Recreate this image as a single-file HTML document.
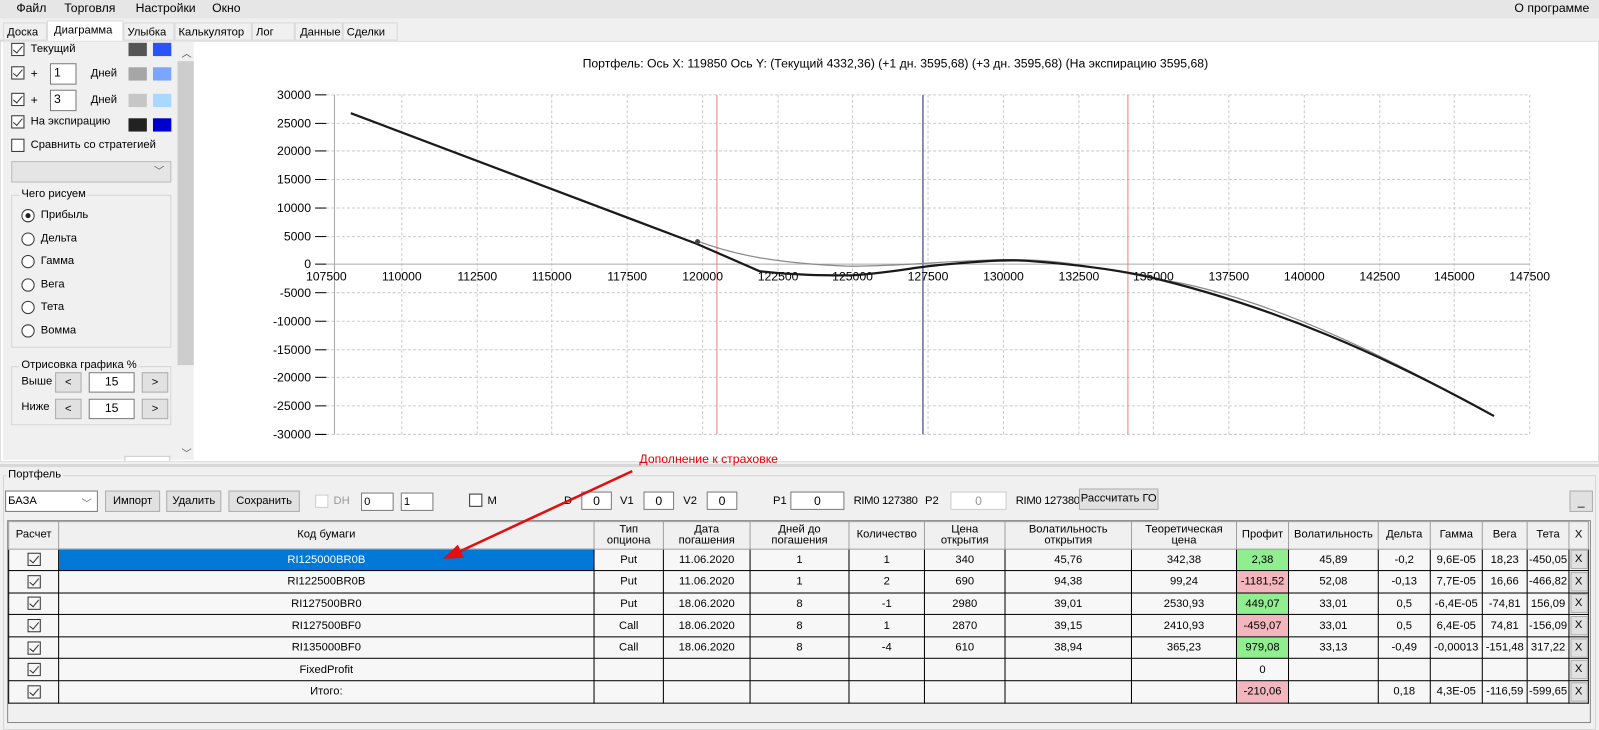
<!DOCTYPE html><html><head><meta charset="utf-8"><style>
*{box-sizing:border-box}body{margin:0;width:1599px;height:719px;overflow:hidden;background:#f0f0f0;font-family:"Liberation Sans",sans-serif;font-size:12px;color:#000;position:relative}
#w{position:absolute;left:0;top:0;width:1568px;height:705px;transform:scale(1.0198);transform-origin:0 0}
.a{position:absolute;white-space:nowrap}
.cb{position:absolute;width:13px;height:13px;border:1px solid #333;background:#fff}
.cb.c::after{content:"";position:absolute;left:3px;top:0px;width:4px;height:8px;border:solid #333;border-width:0 1px 1px 0;transform:rotate(40deg)}
.sw{position:absolute;width:18px;height:13px}
.tb{position:absolute;border:1px solid #7a7a7a;background:#fff;text-align:center;height:18px;line-height:16px}
.btn{position:absolute;border:1px solid #adadad;background:#e1e1e1;text-align:center;height:21px;line-height:19px}
.rad{position:absolute;width:13px;height:13px;border:1px solid #333;border-radius:50%;background:#fff}
table{position:absolute;left:8px;top:511px;border-collapse:collapse;font-size:11px}
td{border:1px solid #000;text-align:center;height:21.6px;padding:0;background:#f7f7f7;line-height:12px}
th{border:1px solid #a0a0a0;font-weight:normal;background:#f0f0f0;height:26.5px;line-height:11px;font-size:11px;padding:0}
td.g{background:#90ee90}td.r{background:#f4b6be}
.ck{display:inline-block;width:13px;height:13px;border:1px solid #333;position:relative;vertical-align:middle}
.ck::after{content:"";position:absolute;left:3px;top:0;width:4px;height:8px;border:solid #333;border-width:0 1px 1px 0;transform:rotate(40deg)}
.x{border:1px solid #adadad;background:#e1e1e1;display:inline-block;width:17px;height:19px;line-height:17px}
</style></head><body><div id="w">
<div class="a" style="left:0;top:0;width:1568px;height:18px;background:#e6e6e6"></div>
<div class="a" style="left:16px;top:1px;font-size:12px">Файл</div>
<div class="a" style="left:63px;top:1px">Торговля</div>
<div class="a" style="left:133px;top:1px">Настройки</div>
<div class="a" style="left:208px;top:1px">Окно</div>
<div class="a" style="left:1485px;top:1px">О программе</div>
<div class="a" style="left:0;top:22px;width:390px;height:18px;border-bottom:1px solid #ccc"></div>
<div class="a" style="left:3px;top:22px;width:43px;height:18px;border:1px solid #d9d9d9;padding:3px 3px;font-size:11px">Доска</div>
<div class="a" style="left:46px;top:20px;width:75px;height:21px;background:#fff;border:1px solid #d9d9d9;border-bottom:none;padding:3px 6px;font-size:11px">Диаграмма</div>
<div class="a" style="left:121px;top:22px;width:50px;height:18px;border:1px solid #d9d9d9;padding:3px 3px;font-size:11px">Улыбка</div>
<div class="a" style="left:171px;top:22px;width:76px;height:18px;border:1px solid #d9d9d9;padding:3px 3px;font-size:11px">Калькулятор</div>
<div class="a" style="left:247px;top:22px;width:42px;height:18px;border:1px solid #d9d9d9;padding:3px 3px;font-size:11px">Лог</div>
<div class="a" style="left:289px;top:22px;width:47px;height:18px;border:1px solid #d9d9d9;padding:3px 1px;text-align:right;font-size:11px">Данные</div>
<div class="a" style="left:336px;top:22px;width:54px;height:18px;border:1px solid #d9d9d9;padding:3px 3px;font-size:11px">Сделки</div>
<div class="a" style="left:0;top:40px;width:1568px;height:413px;background:#fff;border:1px solid #ddd"></div>
<div class="a" style="left:3px;top:41px;width:171px;height:410px;background:#f0f0f0"></div>
<div class="a" style="left:174px;top:41px;width:16px;height:410px;background:#f0f0f0"></div>
<div class="a" style="left:174px;top:60px;width:16px;height:298px;background:#cdcdcd"></div>
<div class="a" style="left:178px;top:44px;font-size:10px;color:#555">︿</div>
<div class="a" style="left:178px;top:436px;font-size:10px;color:#555">﹀</div>
<div class="cb c" style="left:11px;top:42px"></div><div class="a" style="left:30px;top:42px;font-size:11px">Текущий</div>
<div class="sw" style="left:126px;top:42px;background:#555"></div><div class="sw" style="left:150px;top:42px;background:#2a52ff"></div>
<div class="cb c" style="left:11px;top:65px"></div><div class="a" style="left:30px;top:65px">+</div><div class="tb" style="left:49px;top:62px;width:26px;height:21px;text-align:left;padding-left:3px">1</div><div class="a" style="left:89px;top:66px;font-size:11px">Дней</div>
<div class="sw" style="left:126px;top:66px;background:#a6a6a6"></div><div class="sw" style="left:150px;top:66px;background:#7aa6ff"></div>
<div class="cb c" style="left:11px;top:91px"></div><div class="a" style="left:30px;top:91px">+</div><div class="tb" style="left:49px;top:88px;width:26px;height:21px;text-align:left;padding-left:3px">3</div><div class="a" style="left:89px;top:92px;font-size:11px">Дней</div>
<div class="sw" style="left:126px;top:92px;background:#c6c6c6"></div><div class="sw" style="left:150px;top:92px;background:#a8d8ff"></div>
<div class="cb c" style="left:11px;top:113px"></div><div class="a" style="left:30px;top:113px;font-size:11px">На экспирацию</div>
<div class="sw" style="left:126px;top:116px;background:#222"></div><div class="sw" style="left:150px;top:116px;background:#0000cc"></div>
<div class="cb" style="left:11px;top:136px"></div><div class="a" style="left:30px;top:136px;font-size:11px">Сравнить со стратегией</div>
<div class="a" style="left:11px;top:158px;width:157px;height:21px;border:1px solid #bbb;background:#e5e5e5;text-align:right;padding-right:6px;color:#555;font-size:10px;line-height:19px">﹀</div>
<div class="a" style="left:11px;top:191px;width:157px;height:150px;border:1px solid #d5d5d5"></div>
<div class="a" style="left:19px;top:184px;background:#f0f0f0;padding:0 2px;font-size:11px">Чего рисуем</div>
<div class="rad" style="left:21px;top:205px"><div style="position:absolute;left:3px;top:3px;width:5px;height:5px;border-radius:50%;background:#222"></div></div><div class="a" style="left:40px;top:205px;font-size:11px">Прибыль</div>
<div class="rad" style="left:21px;top:228px"></div><div class="a" style="left:40px;top:228px;font-size:11px">Дельта</div>
<div class="rad" style="left:21px;top:250px"></div><div class="a" style="left:40px;top:250px;font-size:11px">Гамма</div>
<div class="rad" style="left:21px;top:273px"></div><div class="a" style="left:40px;top:273px;font-size:11px">Вега</div>
<div class="rad" style="left:21px;top:295px"></div><div class="a" style="left:40px;top:295px;font-size:11px">Тета</div>
<div class="rad" style="left:21px;top:318px"></div><div class="a" style="left:40px;top:318px;font-size:11px">Вомма</div>
<div class="a" style="left:11px;top:359px;width:157px;height:58px;border:1px solid #d5d5d5"></div>
<div class="a" style="left:19px;top:352px;background:#f0f0f0;padding:0 2px;font-size:11px">Отрисовка графика %</div>
<div class="a" style="left:21px;top:368px;font-size:11px">Выше</div><div class="btn" style="left:54px;top:365px;width:26px;height:20px;font-size:11px">&lt;</div><div class="tb" style="left:87px;top:365px;width:45px;height:20px">15</div><div class="btn" style="left:139px;top:365px;width:26px;height:20px;font-size:11px">&gt;</div>
<div class="a" style="left:21px;top:393px;font-size:11px">Ниже</div><div class="btn" style="left:54px;top:391px;width:26px;height:20px;font-size:11px">&lt;</div><div class="tb" style="left:87px;top:391px;width:45px;height:20px">15</div><div class="btn" style="left:139px;top:391px;width:26px;height:20px;font-size:11px">&gt;</div>
<div class="a" style="left:122px;top:447px;width:45px;height:5px;border:1px solid #ccc;border-bottom:none;background:#fff"></div>

<svg class="a" style="left:0;top:0" width="1568" height="460">
<text x="878" y="66" text-anchor="middle" font-family="Liberation Sans" font-size="12">Портфель: Ось X:  119850 Ось Y:   (Текущий 4332,36)   (+1 дн. 3595,68)   (+3 дн. 3595,68)   (На экспирацию 3595,68)</text>
<g stroke="#ccc" stroke-dasharray="3,2" stroke-width="1">
<line x1="320" y1="93" x2="1500" y2="93"/><line x1="320" y1="121" x2="1500" y2="121"/><line x1="320" y1="148" x2="1500" y2="148"/><line x1="320" y1="176" x2="1500" y2="176"/><line x1="320" y1="204" x2="1500" y2="204"/><line x1="320" y1="232" x2="1500" y2="232"/><line x1="320" y1="287" x2="1500" y2="287"/><line x1="320" y1="315" x2="1500" y2="315"/><line x1="320" y1="343" x2="1500" y2="343"/><line x1="320" y1="370" x2="1500" y2="370"/><line x1="320" y1="398" x2="1500" y2="398"/><line x1="320" y1="426" x2="1500" y2="426"/>
<line x1="394" y1="93" x2="394" y2="426"/><line x1="468" y1="93" x2="468" y2="426"/><line x1="541" y1="93" x2="541" y2="426"/><line x1="615" y1="93" x2="615" y2="426"/><line x1="689" y1="93" x2="689" y2="426"/><line x1="763" y1="93" x2="763" y2="426"/><line x1="836" y1="93" x2="836" y2="426"/><line x1="910" y1="93" x2="910" y2="426"/><line x1="984" y1="93" x2="984" y2="426"/><line x1="1058" y1="93" x2="1058" y2="426"/><line x1="1131" y1="93" x2="1131" y2="426"/><line x1="1205" y1="93" x2="1205" y2="426"/><line x1="1279" y1="93" x2="1279" y2="426"/><line x1="1353" y1="93" x2="1353" y2="426"/><line x1="1426" y1="93" x2="1426" y2="426"/><line x1="1500" y1="93" x2="1500" y2="426"/>
</g>
<line x1="328" y1="93" x2="328" y2="426" stroke="#aaa"/>
<line x1="320" y1="259" x2="1500" y2="259" stroke="#aaa"/>
<line x1="703" y1="93" x2="703" y2="426" stroke="#f08080"/>
<line x1="1106" y1="93" x2="1106" y2="426" stroke="#f08080"/>
<line x1="905" y1="93" x2="905" y2="426" stroke="#6a6a9a" stroke-width="1.5"/>
<g font-family="Liberation Sans" font-size="12" text-anchor="end">
<text x="305" y="97">30000</text><text x="305" y="125">25000</text><text x="305" y="152">20000</text><text x="305" y="180">15000</text><text x="305" y="208">10000</text><text x="305" y="236">5000</text><text x="305" y="263">0</text><text x="305" y="291">-5000</text><text x="305" y="319">-10000</text><text x="305" y="347">-15000</text><text x="305" y="374">-20000</text><text x="305" y="402">-25000</text><text x="305" y="430">-30000</text>
</g>
<g stroke="#000"><line x1="309" y1="93" x2="320" y2="93"/><line x1="309" y1="121" x2="320" y2="121"/><line x1="309" y1="148" x2="320" y2="148"/><line x1="309" y1="176" x2="320" y2="176"/><line x1="309" y1="204" x2="320" y2="204"/><line x1="309" y1="232" x2="320" y2="232"/><line x1="309" y1="259" x2="320" y2="259"/><line x1="309" y1="287" x2="320" y2="287"/><line x1="309" y1="315" x2="320" y2="315"/><line x1="309" y1="343" x2="320" y2="343"/><line x1="309" y1="370" x2="320" y2="370"/><line x1="309" y1="398" x2="320" y2="398"/><line x1="309" y1="426" x2="320" y2="426"/></g>
<g font-family="Liberation Sans" font-size="12" text-anchor="middle">
<text x="320" y="275">107500</text><text x="394" y="275">110000</text><text x="468" y="275">112500</text><text x="541" y="275">115000</text><text x="615" y="275">117500</text><text x="689" y="275">120000</text><text x="763" y="275">122500</text><text x="836" y="275">125000</text><text x="910" y="275">127500</text><text x="984" y="275">130000</text><text x="1058" y="275">132500</text><text x="1131" y="275">135000</text><text x="1205" y="275">137500</text><text x="1279" y="275">140000</text><text x="1353" y="275">142500</text><text x="1426" y="275">145000</text><text x="1500" y="275">147500</text>
</g>
<path d="M683,236 C720,250 760,258 830,261 C880,262 950,253 1010,255 C1060,257 1100,268 1160,278 C1260,300 1360,350 1465,408" fill="none" stroke="#888" stroke-width="1.2"/>
<path d="M344,111 L683,239 L745,266 C780,270 810,270 835,270 C870,268 890,263 920,260 C960,256 990,254 1010,256 C1050,259 1090,264 1120,270 C1250,300 1360,350 1465,408" fill="none" stroke="#1a1a1a" stroke-width="2.2"/>
<circle cx="684" cy="237" r="2.5" fill="#444"/>
</svg>

<div class="a" style="left:0;top:455px;width:1568px;height:3px;background:#d8d8d8"></div>
<div class="a" style="left:3px;top:466px;width:1562px;height:250px;border:1px solid #d5d5d5"></div>
<div class="a" style="left:6px;top:459px;background:#f0f0f0;padding:0 2px;font-size:11px">Портфель</div>
<div class="a" style="left:627px;top:443px;color:#e00000;font-size:12px">Дополнение к страховке</div>
<div class="a" style="left:5px;top:481px;width:91px;height:21px;border:1px solid #7a7a7a;background:#fff;padding:3px 2px;font-size:11px">БАЗА<span style="position:absolute;right:5px;top:3px;color:#666;font-size:10px">﹀</span></div>
<div class="btn" style="left:103px;top:481px;width:54px;font-size:11px">Импорт</div>
<div class="btn" style="left:163px;top:481px;width:54px;font-size:11px">Удалить</div>
<div class="btn" style="left:224px;top:481px;width:70px;font-size:11px">Сохранить</div>
<div class="cb" style="left:309px;top:485px;border-color:#ccc"></div><div class="a" style="left:327px;top:485px;color:#999;font-size:11px">DH</div>
<div class="tb" style="left:354px;top:483px;width:32px;text-align:left;padding-left:2px;font-size:11px">0</div>
<div class="tb" style="left:393px;top:483px;width:32px;text-align:left;padding-left:2px;font-size:11px">1</div>
<div class="cb" style="left:460px;top:484px"></div><div class="a" style="left:478px;top:485px;font-size:11px">M</div>
<div class="a" style="left:553px;top:485px;font-size:11px">D</div><div class="tb" style="left:570px;top:482px;width:30px">0</div>
<div class="a" style="left:608px;top:485px;font-size:11px">V1</div><div class="tb" style="left:631px;top:482px;width:30px">0</div>
<div class="a" style="left:670px;top:485px;font-size:11px">V2</div><div class="tb" style="left:693px;top:482px;width:30px">0</div>
<div class="a" style="left:758px;top:485px;font-size:11px">P1</div><div class="tb" style="left:775px;top:482px;width:53px">0</div>
<div class="a" style="left:837px;top:485px;font-size:11px;letter-spacing:-0.3px">RIM0 127380</div><div class="a" style="left:907px;top:485px;font-size:11px">P2</div>
<div class="tb" style="left:932px;top:482px;width:55px;color:#999;border-color:#ccc">0</div>
<div class="a" style="left:996px;top:485px;font-size:11px;letter-spacing:-0.3px">RIM0 127380</div>
<div class="btn" style="left:1058px;top:479px;width:78px;font-size:11px">Рассчитать ГО</div>
<div class="btn" style="left:1539px;top:481px;width:23px">_</div>
<div class="a" style="left:7px;top:510px;width:1553px;height:199px;background:#f0f0f0;border:1px solid #888"></div>
<table>
<tr><th style="width:49px">Расчет</th><th style="width:525px">Код бумаги</th><th style="width:68px">Тип<br>опциона</th><th style="width:85px">Дата<br>погашения</th><th style="width:97px">Дней до<br>погашения</th><th style="width:74px">Количество</th><th style="width:79px">Цена<br>открытия</th><th style="width:124px">Волатильность<br>открытия</th><th style="width:103px">Теоретическая<br>цена</th><th style="width:51px">Профит</th><th style="width:88px">Волатильность</th><th style="width:51px">Дельта</th><th style="width:51px">Гамма</th><th style="width:44px">Вега</th><th style="width:41px">Тета</th><th style="width:19px">X</th></tr>
<tr><td><span class="ck"></span></td><td style="background:#0078d7;color:#fff">RI125000BR0B</td><td>Put</td><td>11.06.2020</td><td>1</td><td>1</td><td>340</td><td>45,76</td><td>342,38</td><td class="g">2,38</td><td>45,89</td><td>-0,2</td><td>9,6E-05</td><td>18,23</td><td>-450,05</td><td><span class="x">X</span></td></tr>
<tr><td><span class="ck"></span></td><td>RI122500BR0B</td><td>Put</td><td>11.06.2020</td><td>1</td><td>2</td><td>690</td><td>94,38</td><td>99,24</td><td class="r">-1181,52</td><td>52,08</td><td>-0,13</td><td>7,7E-05</td><td>16,66</td><td>-466,82</td><td><span class="x">X</span></td></tr>
<tr><td><span class="ck"></span></td><td>RI127500BR0</td><td>Put</td><td>18.06.2020</td><td>8</td><td>-1</td><td>2980</td><td>39,01</td><td>2530,93</td><td class="g">449,07</td><td>33,01</td><td>0,5</td><td>-6,4E-05</td><td>-74,81</td><td>156,09</td><td><span class="x">X</span></td></tr>
<tr><td><span class="ck"></span></td><td>RI127500BF0</td><td>Call</td><td>18.06.2020</td><td>8</td><td>1</td><td>2870</td><td>39,15</td><td>2410,93</td><td class="r">-459,07</td><td>33,01</td><td>0,5</td><td>6,4E-05</td><td>74,81</td><td>-156,09</td><td><span class="x">X</span></td></tr>
<tr><td><span class="ck"></span></td><td>RI135000BF0</td><td>Call</td><td>18.06.2020</td><td>8</td><td>-4</td><td>610</td><td>38,94</td><td>365,23</td><td class="g">979,08</td><td>33,13</td><td>-0,49</td><td>-0,00013</td><td>-151,48</td><td>317,22</td><td><span class="x">X</span></td></tr>
<tr><td><span class="ck"></span></td><td>FixedProfit</td><td></td><td></td><td></td><td></td><td></td><td></td><td></td><td>0</td><td></td><td></td><td></td><td></td><td></td><td><span class="x">X</span></td></tr>
<tr><td><span class="ck"></span></td><td>Итого:</td><td></td><td></td><td></td><td></td><td></td><td></td><td></td><td class="r">-210,06</td><td></td><td>0,18</td><td>4,3E-05</td><td>-116,59</td><td>-599,65</td><td><span class="x">X</span></td></tr>
</table>
<svg class="a" style="left:0;top:0;z-index:5" width="1568" height="705"><line x1="620" y1="462" x2="448" y2="542" stroke="#e01010" stroke-width="2.5"/><path d="M434,548 L449,534 L455,547 Z" fill="#e01010"/></svg>
</div></body></html>
